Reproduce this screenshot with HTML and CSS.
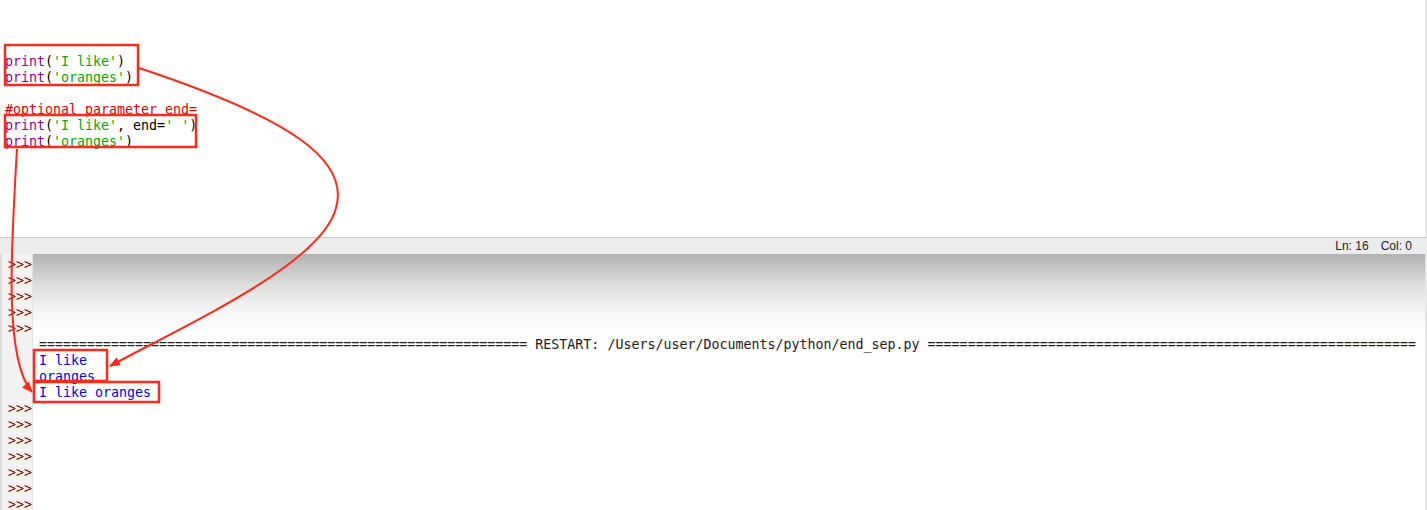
FILE: index.html
```html
<!DOCTYPE html>
<html>
<head>
  <meta charset="UTF-8">
  <link rel="stylesheet" href="styles.css">
</head>
<body>
  <div class="window">
    <!--Editor pane-->
    <div class="editor">
      <div class="line"><span class="builtin">print</span>(<span class="str">'I like'</span>)</div>
      <div class="line"><span class="builtin">print</span>(<span class="str">'oranges'</span>)</div>
      <div class="line">&nbsp;</div>
      <div class="line"><span class="comment">#optional parameter end=</span></div>
      <div class="line"><span class="builtin">print</span>(<span class="str">'I like'</span>, end=<span class="str">' '</span>)</div>
      <div class="line"><span class="builtin">print</span>(<span class="str">'oranges'</span>)</div>
    </div>

    <!--Status bar-->
    <div class="statusbar">
      <span>Ln: 16</span>
      <span>Col: 0</span>
    </div>

    <!--Shell pane-->
    <div class="shell">
      <div class="gutter">
        <div class="line">&gt;&gt;&gt;</div>
        <div class="line">&gt;&gt;&gt;</div>
        <div class="line">&gt;&gt;&gt;</div>
        <div class="line">&gt;&gt;&gt;</div>
        <div class="line">&gt;&gt;&gt;</div>
        <div class="line">&nbsp;</div>
        <div class="line">&nbsp;</div>
        <div class="line">&nbsp;</div>
        <div class="line">&nbsp;</div>
        <div class="line">&gt;&gt;&gt;</div>
        <div class="line">&gt;&gt;&gt;</div>
        <div class="line">&gt;&gt;&gt;</div>
        <div class="line">&gt;&gt;&gt;</div>
        <div class="line">&gt;&gt;&gt;</div>
        <div class="line">&gt;&gt;&gt;</div>
        <div class="line">&gt;&gt;&gt;</div>
      </div>
      <div class="output">
        <div class="line">&nbsp;</div>
        <div class="line">&nbsp;</div>
        <div class="line">&nbsp;</div>
        <div class="line">&nbsp;</div>
        <div class="line">&nbsp;</div>
        <div class="line restart">============================================================= RESTART: /Users/user/Documents/python/end_sep.py =============================================================</div>
        <div class="line stdout">I like</div>
        <div class="line stdout">oranges</div>
        <div class="line stdout">I like oranges</div>
      </div>
    </div>
  </div>

  <!--Annotations drawn over the screenshot-->
  <svg class="notes" width="1427" height="510" viewBox="0 0 1427 510">
    <defs>
      <marker id="head" markerWidth="11" markerHeight="9" refX="10" refY="4.5" orient="auto" markerUnits="userSpaceOnUse">
        <path d="M0,0 L11,4.5 L0,9 Z" fill="#ff2a1a"/>
      </marker>
    </defs>
    <rect x="5" y="45" width="133" height="40" fill="none" stroke="#ff2a1a" stroke-width="2.5"/>
    <rect x="5" y="115" width="191" height="32" fill="none" stroke="#ff2a1a" stroke-width="2.5"/>
    <rect x="34" y="350" width="73" height="31" fill="none" stroke="#ff2a1a" stroke-width="2.5"/>
    <rect x="34" y="382" width="125" height="20" fill="none" stroke="#ff2a1a" stroke-width="2.5"/>
    <path d="M139,68 C290,118 350,160 336,208 C322,262 200,318 110,366" fill="none" stroke="#ff2a1a" stroke-width="2" marker-end="url(#head)"/>
    <path d="M17,149 C11,250 4,360 32,392" fill="none" stroke="#ff2a1a" stroke-width="2" marker-end="url(#head)"/>
  </svg>
</body>
</html>
```

FILE: styles.css
```css
body { margin: 0; background: #fff; overflow: hidden; }

.window { width: 1427px; height: 510px; display: flex; flex-direction: column; font-family: "DejaVu Sans Mono", monospace; font-size: 13.3px; color: #000; overflow: hidden; }
.line { height: 16px; line-height: 16px; white-space: pre; }

.editor { flex: none; height: 237px; box-sizing: border-box; padding: 54px 0 0 5px; border-right: 2px solid #e6e6e6; }
.builtin { color: #900090; }
.str { color: #00aa00; }
.comment { color: #dd0000; }

.statusbar { flex: none; height: 17px; box-sizing: border-box; border-top: 1px solid #c9c9c9; background: #ececec; display: flex; justify-content: flex-end; gap: 12px; padding-right: 15px; font-family: "Liberation Sans", Arial, sans-serif; font-size: 12px; line-height: 16px; color: #222; }

.shell { flex: 1; min-height: 0; overflow: hidden; display: flex; }
.gutter { flex: none; width: 33px; box-sizing: border-box; padding: 3px 0 0 6px; background: #f2f2f2; border-left: 2px solid #dcdcdc; border-right: 1px solid #e2e2e2; color: #800000; }
.output { flex: 1; padding: 3px 0 0 6px; background: linear-gradient(#b2b2b2 0px, #dcdcdc 30px, #f4f4f4 55px, #fff 80px); border-right: 2px solid #e6e6e6; }
.restart { color: #222; }
.stdout { color: #0000ff; }

.notes { position: absolute; left: 0; top: 0; pointer-events: none; }
```
